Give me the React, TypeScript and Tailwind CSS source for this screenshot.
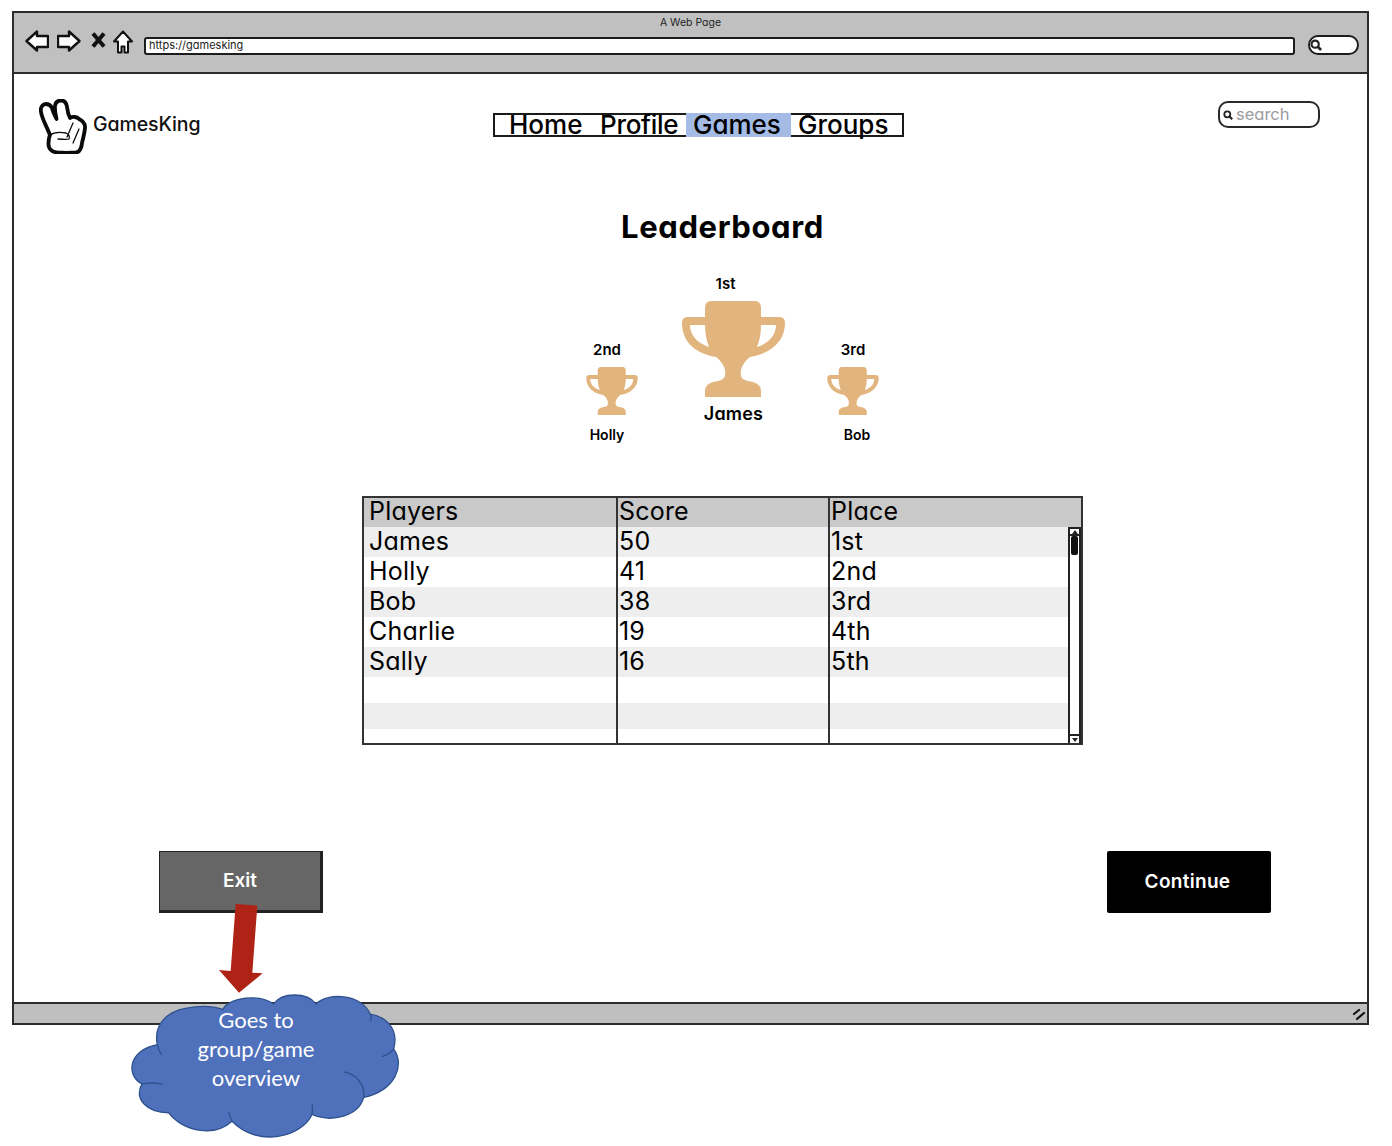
const ui = "font-['Inter','Noto_Sans',sans-serif] [font-feature-settings:'cv11']";

function Trophy({ className }: { className: string }) {
  return (
    <svg viewBox="0 0 103 96" className={className}>
      <path
        fill="#e3b57e"
        fillRule="evenodd"
        d="M29 0H73C77 0 79 3 79 7V16H97C101 16 103 18 103 22C103 38 92 52 68 56C63 60 60 64 59 69C58 76 60 79 66 80C74 81 79 84 79 90V96H23V90C23 84 28 81 36 80C42 79 44 76 43 69C42 64 39 60 34 56C10 52 0 38 0 22C0 18 2 16 6 16H23V7C23 3 25 0 29 0ZM8 24H23C23 31 24 39 27 46C15 42 8 34 8 24ZM94 24H79C79 31 78 39 75 46C87 42 94 34 94 24Z"
      />
    </svg>
  );
}

function Lens({ className }: { className: string }) {
  return (
    <svg viewBox="0 0 10 10" className={className} fill="none" stroke="#222" strokeWidth="1.8">
      <circle cx="4.3" cy="4.3" r="3" />
      <path d="M6.5 6.5L9.2 9.2" strokeWidth="2.2" />
    </svg>
  );
}

const rows = [
  { p: "James", s: "50", r: "1st", h: "h-[30px]", bg: "bg-[#eeeeee]" },
  { p: "Holly", s: "41", r: "2nd", h: "h-[30px]", bg: "bg-white" },
  { p: "Bob", s: "38", r: "3rd", h: "h-[30px]", bg: "bg-[#eeeeee]" },
  { p: "Charlie", s: "19", r: "4th", h: "h-[30px]", bg: "bg-white" },
  { p: "Sally", s: "16", r: "5th", h: "h-[30px]", bg: "bg-[#eeeeee]" },
  { p: "", s: "", r: "", h: "h-[26px]", bg: "bg-white" },
  { p: "", s: "", r: "", h: "h-[26px]", bg: "bg-[#eeeeee]" },
  { p: "", s: "", r: "", h: "flex-1", bg: "bg-white" },
];

export default function App() {
  return (
    <div className={`relative w-[1392px] h-[1146px] bg-white overflow-hidden pt-[11px] pl-[12px] text-black ${ui}`}>
      <div className="w-[1357px] h-[1014px] border-2 border-[#2c2c2c] flex flex-col bg-white">
        {/* browser chrome */}
        <div className="h-[61px] shrink-0 bg-[#c0c0c0] border-b-2 border-[#2c2c2c] pt-[3px]">
          <div className="h-[14px] text-center text-[10.5px] leading-[14px] text-[#222]">A Web Page</div>
          <div className="flex items-start pl-[11px]">
            <svg viewBox="0 0 24 22" className="w-[24px] h-[22px]">
              <path d="M1.5 11L12 1.5V6H23V17H12V20.5Z" fill="#fff" stroke="#111" strokeWidth="2.4" strokeLinejoin="round" />
            </svg>
            <svg viewBox="0 0 24 22" className="w-[24px] h-[22px] ml-[8px]">
              <path d="M22.5 11L12 1.5V6H1V17H12V20.5Z" fill="#fff" stroke="#111" strokeWidth="2.4" strokeLinejoin="round" />
            </svg>
            <svg viewBox="0 0 15 16" className="w-[15px] h-[16px] ml-[10px] mt-[2px]">
              <path d="M2 1.5L13 14.5M13 1.5L2 14.5" stroke="#111" strokeWidth="4" />
            </svg>
            <svg viewBox="0 0 20 24" className="w-[20px] h-[24px] ml-[7px]">
              <path d="M10 1.5L19 11.5H15V22.5H11.5V16.5H8.5V22.5H5V11.5H1Z" fill="#fff" stroke="#111" strokeWidth="2" strokeLinejoin="round" />
            </svg>
            <div className="w-[1151px] h-[18px] ml-[11px] mt-[7px] bg-white border-2 border-[#1c1c1c] rounded-[3px] text-[11px] leading-[13px] pl-[3px] text-[#222]">
              https://gamesking
            </div>
            <div className="w-[51px] h-[20px] ml-[13px] mt-[5px] bg-white border-2 border-[#1c1c1c] rounded-[10px] flex items-center">
              <Lens className="w-[12px] h-[12px]" />
            </div>
          </div>
        </div>

        {/* page */}
        <div className="flex-1 flex flex-col">
          <div className="flex items-start pl-[25px] pt-[24px] h-[80px] shrink-0">
            <div className="w-[454px] flex items-center h-[56px]">
              <svg viewBox="0 0 48 55" className="w-[48px] h-[55px]" fill="none" stroke="#0a0a0a" strokeLinejoin="round" strokeLinecap="round">
                <path
                  strokeWidth="3.8"
                  d="M11 36C8 28 3 20 2 13C1 8 4 5 7 5C10 5 12 7 13 9C14 13 16 17 17.5 20C16.5 15 15.5 11 16 7C16.5 3 19 1.5 22 1.5C25.5 1.5 27.5 4 28 8C28.5 12 29.5 16 31 19C34 17 38 18 40 20C44 22 46.5 25 46 29C45.5 35 44 39 43 44C42.5 49 41 53 37 53.5C31 54 25 54 18 53.5C13 53 9.5 50 9.5 45C9.5 41 10 38 11 36Z"
                />
                <path strokeWidth="1.3" d="M11 36C15 33 22 33 27 34C30 35 31 38 30 40C28 41 23 40 19 40M34 44L40 30M34 24L28 38" />
              </svg>
              <span className="ml-[6px] text-[19.5px] leading-[26px] text-[#111] mb-[4px] font-medium tracking-[-0.1px]">GamesKing</span>
            </div>
            <div className="w-[411px] h-[24px] mt-[15px] border-2 border-[#1a1a1a] flex text-[26px] leading-[19px] text-black font-medium">
              <span className="pl-[14px] w-[87px]">Home</span>
              <span className="pl-[18px] w-[104px] tracking-[-0.3px]">Profile</span>
              <span className="bg-[#a4bbe6] w-[105px] -my-[2px] leading-[23px] pl-[7px]">Games</span>
              <span className="pl-[7px] flex-1">Groups</span>
            </div>
            <div className="w-[102px] h-[27px] ml-[314px] mt-[3px] border-2 border-[#2a2a2a] rounded-[10px] flex items-center pl-[3px]">
              <Lens className="w-[10px] h-[10px]" />
              <span className="ml-[3px] text-[16.5px] leading-[20px] -mt-[2px] text-[#9b9ba3]">search</span>
            </div>
          </div>

          <div className="ml-[348px] w-[721px] mt-[53px] shrink-0">
            <h1 className="text-center text-[31px] leading-[40px] font-bold tracking-[0.6px]">Leaderboard</h1>
            <div className="ml-[224px] flex items-start mt-[28px] h-[169px]">
              <div className="w-[52px] mt-[66px]">
                <div className="w-[52px] -ml-[5px] text-center text-[15px] leading-[18px] font-semibold">2nd</div>
                <Trophy className="w-[52px] h-[48px] mt-[8px]" />
                <div className="w-[52px] -ml-[5px] mt-[11px] text-center text-[14px] leading-[18px] font-semibold">Holly</div>
              </div>
              <div className="w-[103px] ml-[44px]">
                <div className="text-center pr-[16px] text-[15px] leading-[18px] font-semibold">1st</div>
                <Trophy className="w-[103px] h-[96px] mt-[8px]" />
                <div className="text-center mt-[5px] text-[18px] leading-[24px] font-semibold tracking-[0.2px]">James</div>
              </div>
              <div className="w-[52px] ml-[42px] mt-[66px]">
                <div className="w-[52px] text-center text-[15px] leading-[18px] font-semibold">3rd</div>
                <Trophy className="w-[52px] h-[48px] mt-[8px]" />
                <div className="w-[52px] ml-[4px] mt-[11px] text-center text-[14px] leading-[18px] font-semibold">Bob</div>
              </div>
            </div>

            <div className="mt-[52px] h-[249px] border-2 border-[#333] flex flex-col text-[25px] leading-[28px] tracking-[0.2px] text-black">
              <div className="h-[29px] shrink-0 bg-[#c9c9c9] grid grid-cols-[254px_212px_1fr] leading-[27px]">
                <div className="border-r-2 border-[#333] pl-[5px]">Players</div>
                <div className="border-r-2 border-[#333] pl-[1px]">Score</div>
                <div className="pl-[1px]">Place</div>
              </div>
              <div className="flex-1 flex min-h-0">
                <div className="flex-1 flex flex-col">
                  {rows.map((r, i) => (
                    <div key={i} className={`${r.h} ${r.bg} grid grid-cols-[254px_212px_1fr]`}>
                      <div className="border-r-2 border-[#333] pl-[5px]">{r.p}</div>
                      <div className="border-r-2 border-[#333] pl-[1px]">{r.s}</div>
                      <div className="pl-[1px]">{r.r}</div>
                    </div>
                  ))}
                </div>
                <div className="w-[13px] shrink-0 bg-white border-x-2 border-[#222] flex flex-col justify-between">
                  <div>
                    <div className="h-[9px] border-y-2 border-[#222] bg-white flex items-center justify-center">
                      <div className="w-0 h-0 border-x-[3px] border-x-transparent border-b-[4px] border-b-[#222]" />
                    </div>
                    <div className="h-[19px] mx-auto w-[7px] bg-[#111] rounded-[2px]" />
                  </div>
                  <div className="h-[9px] border-t-2 border-[#222] bg-white flex items-center justify-center">
                    <div className="w-0 h-0 border-x-[3px] border-x-transparent border-t-[4px] border-t-[#222]" />
                  </div>
                </div>
              </div>
            </div>
          </div>

          <div className="ml-[145px] w-[1112px] mt-[106px] flex justify-between">
            <div className="w-[164px] h-[62px] bg-[#666666] border border-[#222] border-r-[3px] border-b-[3px] flex items-center justify-center text-white font-semibold text-[19px]">
              Exit
            </div>
            <div className="w-[164px] h-[62px] bg-black rounded-[2px] flex items-center justify-center pr-[3px] text-white font-semibold text-[19px] tracking-[0.3px]">
              Continue
            </div>
          </div>
        </div>

        <div className="h-[21px] shrink-0 bg-[#bfbfbf] border-t-2 border-[#2c2c2c] flex justify-end items-center pr-[1px]">
          <svg viewBox="0 0 14 12" className="w-[14px] h-[12px]" stroke="#111" strokeWidth="2.2" strokeLinecap="round">
            <path d="M2 6L7 2M5 11L12 5" />
          </svg>
        </div>
      </div>

      {/* annotation over the wireframe */}
      <svg viewBox="0 0 870 918" className="absolute left-[120px] top-[840px] w-[290px] h-[306px]">
        <path d="M347 192L412 197L397 398L428 400L357 458L297 390L332 393Z" fill="#ae2316" />
        <g transform="translate(6 -8) scale(1 1.02)">
          <path
            d="M106 610C95 560 125 515 190 503C230 495 270 495 302 506C325 470 410 460 455 490C480 455 555 455 582 490C620 455 715 460 745 520C800 530 830 570 815 622C850 670 820 745 725 765C710 820 630 840 570 815C540 880 410 915 330 835C280 880 190 870 140 810C75 810 35 770 60 725C10 700 20 625 106 610Z"
            fill="#4f71bc"
            stroke="#2f528f"
            strokeWidth="4"
          />
          <path d="M665 690C700 695 730 725 725 765M815 622C810 630 795 640 780 645M745 520C748 528 748 535 745 540M60 725C75 722 100 722 122 725M106 610C108 620 112 630 118 640M330 835C325 825 322 815 320 808M570 815C572 805 572 795 570 785" fill="none" stroke="#2f528f" strokeWidth="4" />
        </g>
      </svg>
      <div className="absolute left-[176px] top-[1005px] w-[160px] text-center text-white text-[22px] leading-[29px] font-['Lato',sans-serif] [font-feature-settings:normal]">
        Goes to<br />group/game<br />overview
      </div>
    </div>
  );
}
